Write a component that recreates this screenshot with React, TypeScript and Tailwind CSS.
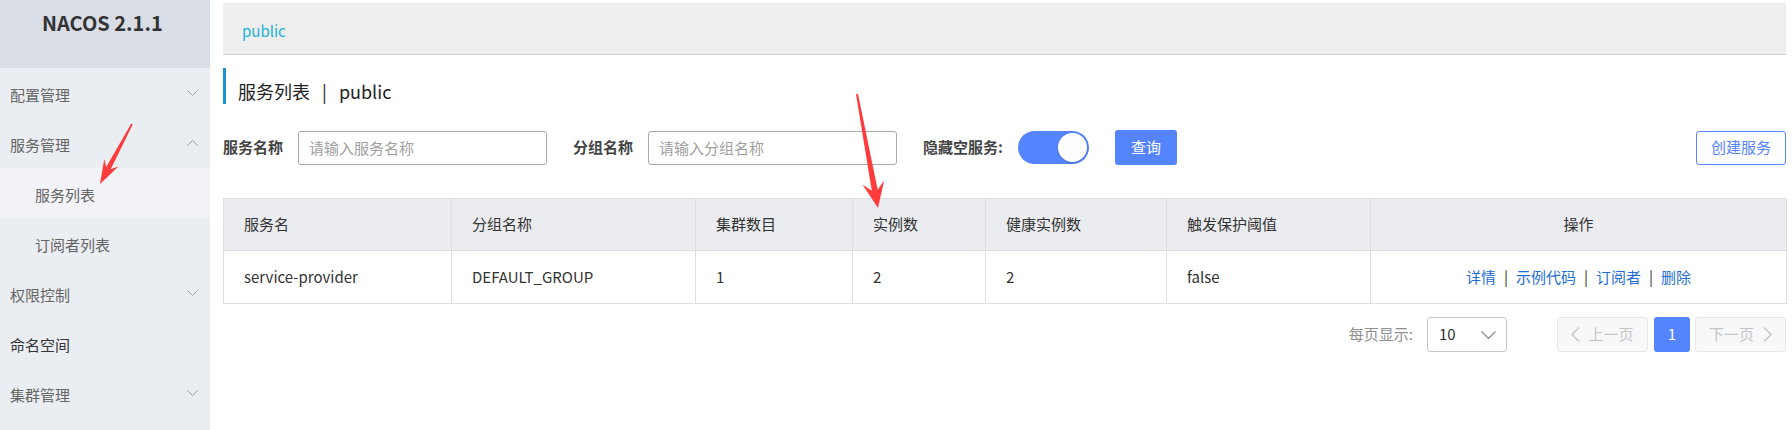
import React from "react";

function ChevronDown() {
  return (
    <svg width="11" height="6" viewBox="0 0 11 6" className="block">
      <polyline points="0.5,0.5 5.5,5.5 10.5,0.5" fill="none" stroke="#9a9a9a" strokeWidth="1" />
    </svg>
  );
}
function ChevronUp() {
  return (
    <svg width="11" height="6" viewBox="0 0 11 6" className="block">
      <polyline points="0.5,5.5 5.5,0.5 10.5,5.5" fill="none" stroke="#9a9a9a" strokeWidth="1" />
    </svg>
  );
}

function NavItem({ label, arrow, dark }: { label: string; arrow?: "down" | "up"; dark?: boolean }) {
  return (
    <div className="h-[50px] flex items-center pl-[10px] pr-[12px] pt-[5px]">
      <span className={dark ? "text-[#333333]" : "text-[#666666]"}>{label}</span>
      {arrow && (
        <span className="ml-auto -mt-[5px]">{arrow === "down" ? <ChevronDown /> : <ChevronUp />}</span>
      )}
    </div>
  );
}

const cols = [228, 244, 157, 133, 181, 204, 416];
const headers = ["服务名", "分组名称", "集群数目", "实例数", "健康实例数", "触发保护阈值", "操作"];
const row = ["service-provider", "DEFAULT_GROUP", "1", "2", "2", "false"];

export default function App() {
  return (
    <div className="relative flex w-[1792px] h-[430px] overflow-hidden bg-white text-[15px] text-[#333333] font-['Noto_Sans_CJK_SC','Liberation_Sans',sans-serif]">
      {/* Sidebar */}
      <aside className="w-[210px] shrink-0 h-full bg-[#eaedf1] flex flex-col">
        <div className="h-[68px] bg-[#d9dde5] pl-[42px] pt-[11px] text-[20px] leading-[24px] font-bold text-[#333333]">
          NACOS 2.1.1
        </div>
        <NavItem label="配置管理" arrow="down" />
        <NavItem label="服务管理" arrow="up" />
        <div className="h-[50px] flex items-center pl-[35px] pt-[5px] bg-[#f2f3f7] text-[#666666]">服务列表</div>
        <div className="h-[50px] flex items-center pl-[35px] pt-[5px] text-[#666666]">订阅者列表</div>
        <NavItem label="权限控制" arrow="down" />
        <NavItem label="命名空间" dark />
        <NavItem label="集群管理" arrow="down" />
      </aside>

      {/* Main */}
      <main className="flex-1 min-w-0 pt-[3px] pl-[13px] pr-[6px] flex flex-col">
        <div className="h-[52px] bg-[#eeeeee] border-b border-[#cfcfcf] flex items-center pl-[19px] pt-[5px]">
          <span className="text-[#22b2d6]">public</span>
        </div>

        <div className="mt-[13px] h-[36px] border-l-[3px] border-[#1b91cf] pl-[12px] flex items-center pt-[10px] text-[18px] text-[#222222]">
          <span>服务列表</span>
          <span className="mx-[12px]">|</span>
          <span>public</span>
        </div>

        <div className="mt-[26px] h-[35px] flex items-center">
          <span className="font-bold text-[#444444] w-[60px] whitespace-nowrap">服务名称</span>
          <input
            className="ml-[15px] w-[249px] h-[34px] border border-[#a5a8b0] rounded-[3px] px-[10px] text-[15px] outline-none placeholder:text-[#a0a0a0]"
            placeholder="请输入服务名称"
          />
          <span className="ml-[26px] font-bold text-[#444444] whitespace-nowrap">分组名称</span>
          <input
            className="ml-[15px] w-[249px] h-[34px] border border-[#a5a8b0] rounded-[3px] px-[10px] text-[15px] outline-none placeholder:text-[#a0a0a0]"
            placeholder="请输入分组名称"
          />
          <span className="ml-[26px] font-bold text-[#444444] whitespace-nowrap">隐藏空服务:</span>
          <div className="ml-[15px] w-[71px] h-[33px] rounded-full bg-[#5584ff] flex items-center justify-end pr-[2px]">
            <div className="w-[29px] h-[29px] rounded-full bg-white shadow-[0_1px_2px_rgba(0,0,0,0.2)]" />
          </div>
          <button className="ml-[26px] w-[62px] h-[35px] rounded-[3px] bg-[#5584ff] text-white text-[15px]">查询</button>
          <button className="ml-auto w-[90px] h-[34px] rounded-[3px] border border-[#5584ff] bg-white text-[#5584ff] text-[15px]">
            创建服务
          </button>
        </div>

        <table className="mt-[33px] border-collapse table-fixed w-[1563px]">
          <colgroup>
            {cols.map((w, i) => (
              <col key={i} style={{ width: w }} />
            ))}
          </colgroup>
          <thead>
            <tr className="h-[52px] bg-[#ebecf0]">
              {headers.map((h, i) => (
                <th
                  key={h}
                  className={`border border-[#dcdee3] font-normal text-[#333333] ${i === 6 ? "text-center" : "text-left pl-[20px]"}`}
                >
                  {h}
                </th>
              ))}
            </tr>
          </thead>
          <tbody>
            <tr className="h-[53px]">
              {row.map((c, i) => (
                <td key={i} className="border border-[#dcdee3] pl-[20px] text-[#333333]">
                  {c}
                </td>
              ))}
              <td className="border border-[#dcdee3] text-center text-[#1f6fd6]">
                <span>详情</span>
                <span className="mx-[8px] text-[#333333]">|</span>
                <span>示例代码</span>
                <span className="mx-[8px] text-[#333333]">|</span>
                <span>订阅者</span>
                <span className="mx-[8px] text-[#333333]">|</span>
                <span>删除</span>
              </td>
            </tr>
          </tbody>
        </table>

        <div className="mt-[13px] h-[35px] flex items-center justify-end">
          <span className="text-[#8f8f8f] whitespace-nowrap">每页显示:</span>
          <div className="ml-[14px] w-[80px] h-[35px] border border-[#c4c6cf] rounded-[3px] flex items-center pl-[11px] pr-[10px]">
            <span className="text-[#333333]">10</span>
            <svg width="15" height="8" viewBox="0 0 15 8" className="ml-auto">
              <polyline points="0.5,0.5 7.5,7.5 14.5,0.5" fill="none" stroke="#888888" strokeWidth="1.2" />
            </svg>
          </div>
          <div className="ml-[50px] w-[91px] h-[35px] border border-[#e6e7eb] bg-[#f7f8fa] rounded-[3px] flex items-center justify-center gap-[8px] text-[#c4c4c4]">
            <svg width="9" height="15" viewBox="0 0 9 15">
              <polyline points="8,0.5 1,7.5 8,14.5" fill="none" stroke="#c4c4c4" strokeWidth="1.3" />
            </svg>
            <span>上一页</span>
          </div>
          <div className="ml-[6px] w-[36px] h-[35px] rounded-[3px] bg-[#5584ff] text-white flex items-center justify-center">1</div>
          <div className="ml-[5px] w-[91px] h-[35px] border border-[#e6e7eb] bg-[#f7f8fa] rounded-[3px] flex items-center justify-center gap-[9px] text-[#c4c4c4]">
            <span>下一页</span>
            <svg width="9" height="15" viewBox="0 0 9 15">
              <polyline points="1,0.5 8,7.5 1,14.5" fill="none" stroke="#c4c4c4" strokeWidth="1.3" />
            </svg>
          </div>
        </div>
      </main>

      {/* Annotation arrows */}
      <svg className="absolute left-0 top-0 pointer-events-none" width="1792" height="430" viewBox="0 0 1792 430">
        <polygon
          points="132.71,124.38 110.68,169.30 118.36,166.56 100,184 104.24,159.04 106.26,166.94 131.29,123.62"
          fill="#ff3b3b"
        />
        <polygon
          points="857.98,93.82 877.69,189.76 884.11,180.44 878,208 862.47,184.42 871.79,190.84 856.02,94.18"
          fill="#ff3b3b"
        />
      </svg>
    </div>
  );
}
